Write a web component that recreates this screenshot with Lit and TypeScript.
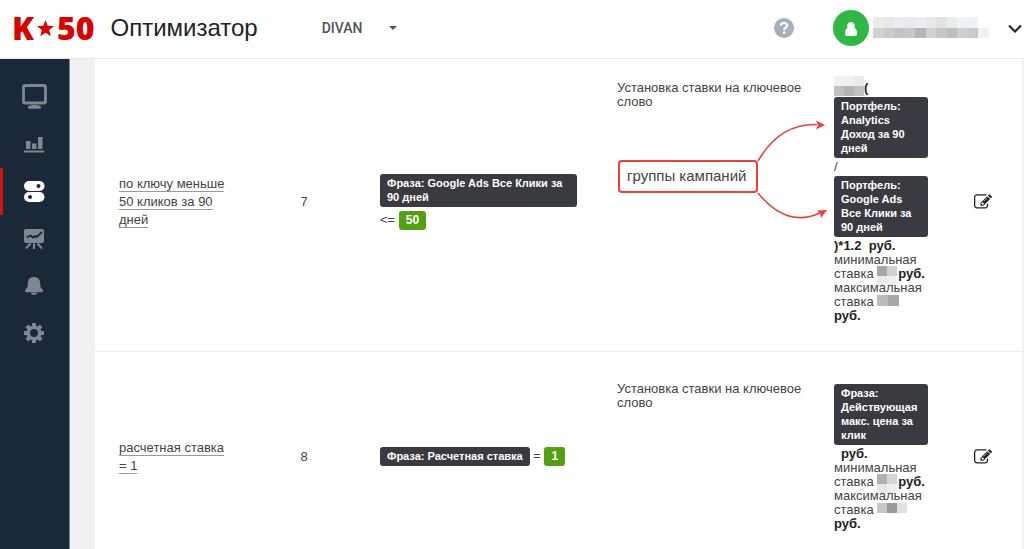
import { LitElement, html, css, svg, nothing } from "lit";
import { customElement, property } from "lit/decorators.js";
import { classMap } from "lit/directives/class-map.js";

/** Grid of flat squares that hides a private value. */
@customElement("masked-value")
class MaskedValue extends LitElement {
  @property({ attribute: false }) rows: string[][] = [];
  @property({ type: Number }) cell = 10;
  @property({ type: Number }) width = 30;
  @property({ type: Number }) lift = 0;

  static styles = css`
    :host {
      display: inline-block;
      height: 14px;
      vertical-align: top;
    }
    svg {
      display: block;
      overflow: visible;
    }
  `;

  render() {
    return html`<svg width=${this.width} height="14" aria-hidden="true" shape-rendering="crispEdges">
      ${this.rows.map((row, y) =>
        row.map((fill, x) => svg`<rect x=${x * this.cell} y=${y * this.cell - this.lift} width=${this.cell} height=${this.cell} fill=${fill}></rect>`)
      )}
    </svg>`;
  }
}

const navItems = [
  {
    label: "Обзор",
    icon: svg`<rect x="6.5" y="5.5" width="22" height="17.5" rx="1.5" fill="none" stroke="currentColor" stroke-width="2.8"/><path d="M11 27.5c0-1.600 3-2.400 6.500-2.400s6.500.8 6.500 2.400c0 .9-.6 1.200-1.500 1.200h-10c-.9 0-1.500-.3-1.500-1.200z" fill="currentColor"/>`,
  },
  {
    label: "Статистика",
    icon: svg`<path d="M9 14h4.500v8H9zM15 16.500h4.500V22H15zM21 10h4.500v12H21zM7 23.500h20v2H7z" fill="currentColor"/>`,
  },
  {
    label: "Оптимизатор",
    active: true,
    icon: svg`<rect x="7" y="7" width="20.500" height="10" rx="5" fill="currentColor"/><rect x="7" y="18" width="20.500" height="10" rx="5" fill="currentColor"/><circle cx="21.500" cy="12" r="2" fill="#1a2937"/><circle cx="13" cy="23" r="2" fill="#1a2937"/>`,
  },
  {
    label: "Отчёты",
    icon: svg`<rect x="7" y="8" width="20" height="14" rx="2" fill="currentColor"/><path d="M9.500 16.500l4-2 2.500 2 2-1.500 1.500 1 5.500-5" fill="none" stroke="#1a2937" stroke-width="1.800"/><path d="M13.500 22.500l-4.500 5M17 22.500V28M20.500 22.500l4.500 5" fill="none" stroke="currentColor" stroke-width="2"/>`,
  },
  {
    label: "Уведомления",
    icon: svg`<path d="M17 9c-4 0-6.200 2.800-6.200 6.500 0 3-.5 4.300-1.600 5.300-.8.700-1.200 1.200-1.200 2.200 0 .7.400 1.200 1.200 1.200h15.600c.8 0 1.200-.5 1.200-1.200 0-1-.4-1.500-1.200-2.200-1.100-1-1.600-2.300-1.600-5.300C23.200 11.800 21 9 17 9zM13.800 24.800c.4 1.400 1.600 2.200 3.200 2.200s2.800-.8 3.200-2.200z" fill="currentColor"/>`,
  },
  {
    label: "Настройки",
    icon: svg`<circle cx="17" cy="18" r="5.800" fill="none" stroke="currentColor" stroke-width="3.600"/><path d="M17 8v4M17 24v4M7 18h4M23 18h4M9.900 10.900l2.900 2.900M21.200 22.200l2.900 2.900M9.900 25.100l2.900-2.900M21.200 13.800l2.900-2.900" stroke="currentColor" stroke-width="4" fill="none"/>`,
  },
];

const editPath =
  "M888 1184l116-116-152-152-116 116v56h96v96h56zm440-720q-16-16-33 1l-350 350q-17 17-1 33t33-1l350-350q17-17 1-33zm80 594v190q0 119-84.500 203.500t-203.500 84.500h-832q-119 0-203.500-84.500t-84.500-203.500v-832q0-119 84.500-203.500t203.500-84.500h832q63 0 117 25 15 7 18 23 3 17-9 29l-49 49q-14 14-32 8-23-6-45-6h-832q-66 0-113 47t-47 113v832q0 66 47 113t113 47h832q66 0 113-47t47-113v-126q0-13 9-22l64-64q15-15 35-7t20 29zm-96-738l288 288-672 672h-288v-288zm444 132l-92 92-288-288 92-92q28-28 68-28t68 28l152 152q28 28 28 68t-28 68z";

const userMask = [
  ["#ebebeb", "#e8e8ea", "#ebedee", "#eae9ea", "#eceef0", "#e8e9ea", "#e0e3e3", "#e9ebed", "#f1f2f3", "#f1f1f2", "#ffffff"],
  ["#d3d1d1", "#cacbcf", "#c2c3c6", "#c6c8cb", "#b3b8bc", "#d2d1d0", "#c5c6cb", "#c0bfc0", "#cfced2", "#c5cad0", "#f0f2f2"],
];
const factorMask = [
  ["#f1f1f1", "#f1f1f1", "#eaeaeb"],
  ["#c2c0c1", "#b6b4b3", "#c1c1c5"],
];

@customElement("app-root")
class AppRoot extends LitElement {
  static styles = css`
    :host {
      display: grid;
      grid-template-rows: auto minmax(0, 1fr);
      height: 100vh;
      background: #f1f1f1;
      color: #444;
      font: 13px/14px "Liberation Sans", Arial, sans-serif;
    }
    *,
    *::before {
      box-sizing: border-box;
    }
    button {
      border: 0;
      padding: 0;
      background: none;
      color: inherit;
      font: inherit;
      cursor: pointer;
    }
    svg {
      display: block;
    }
    .header {
      display: flex;
      align-items: center;
      height: 59px;
      padding: 0 2px 2px 12px;
      background: #fff;
      border-bottom: 1px solid #e8e8e8;
    }
    .logo {
      display: flex;
      align-items: center;
      gap: 3px;
      color: #d90000;
      font: 800 32px/40px "Open Sans", "Noto Sans", sans-serif;
      text-decoration: none;
    }
    .title {
      margin: 0 0 0 16px;
      color: #222;
      font-size: 24px;
      font-weight: 400;
      line-height: 28px;
    }
    .project {
      display: grid;
      align-items: center;
      width: 76px;
      margin-left: 64px;
    }
    .project select,
    .project svg {
      grid-area: 1 / 1;
    }
    .project select {
      appearance: none;
      border: 0;
      padding: 0;
      background: none;
      color: #555;
      font: 500 14px/20px Roboto, sans-serif;
    }
    .project svg {
      justify-self: end;
      pointer-events: none;
    }
    .tools {
      display: flex;
      align-items: center;
      gap: 39px;
      margin-left: auto;
    }
    .user {
      display: flex;
      align-items: center;
    }
    .user masked-value {
      margin: 0 19px 0 4px;
    }
    .body {
      display: grid;
      grid-template-columns: 70px minmax(0, 1fr);
      min-height: 0;
    }
    .nav {
      display: flex;
      flex-direction: column;
      padding-top: 15px;
      background: #1a2937;
      border-right: 1px solid #7a838c;
    }
    .nav-link {
      display: grid;
      place-items: center;
      height: 47px;
      border-left: 3px solid transparent;
      padding-right: 3px;
      color: #7d8892;
    }
    .nav-link.active {
      border-color: #d0160f;
      color: #fff;
    }
    .main {
      overflow-y: auto;
      scrollbar-width: none;
      padding: 0 2px 0 25px;
    }
    .rules {
      width: 100%;
      margin-top: -8px;
      border-collapse: collapse;
      table-layout: fixed;
      background: #fff;
    }
    .col-name {
      width: 157px;
    }
    .col-priority {
      width: 104px;
    }
    .col-condition {
      width: 237px;
    }
    .col-result {
      width: 126px;
    }
    .col-edit {
      width: 86px;
    }
    td {
      padding: 30px 8px 28px 24px;
      text-align: left;
      vertical-align: middle;
    }
    tr {
      border-bottom: 1px solid #eee;
    }
    .name {
      padding-right: 24px;
      line-height: 18px;
    }
    .name a {
      color: inherit;
      text-decoration: none;
      border-bottom: 1px solid #999;
    }
    .priority {
      padding-left: 8px;
      text-align: center;
    }
    .condition {
      padding-right: 16px;
      line-height: 20px;
    }
    .action {
      position: relative;
      vertical-align: top;
    }
    .edit {
      padding-left: 38px;
    }
    .edit button {
      display: block;
      color: #222;
    }
    .tag {
      display: inline-block;
      margin: 2px 0;
      padding: 2px 7px 3px;
      border-radius: 3px;
      background: #3a3b41;
      color: #fff;
      font-size: 11px;
      font-weight: 700;
      line-height: 14px;
      vertical-align: middle;
    }
    .result .tag {
      display: block;
    }
    .tag.value {
      background: #55a012;
      font-size: 12px;
    }
    b {
      color: #222;
    }
    .indent {
      padding-left: 7px;
    }
    .line {
      display: block;
      white-space: pre;
    }
    .callout {
      position: absolute;
      top: 109px;
      left: 25px;
      display: flex;
    }
    .callout-text {
      height: 33px;
      padding: 4px 10px 0 7px;
      border: 2px solid #e8413a;
      border-radius: 4px;
      font-size: 15px;
      line-height: 20px;
      white-space: nowrap;
    }
    .callout svg {
      flex: none;
      margin: -42px 0 0 -1px;
    }
  `;

  private limit(kind: string, mask: string[][], cell: number, width: number, lift: number, wrapped: boolean) {
    return html`<span class="line">${kind}</span
      ><span class="line"
        >ставка <masked-value .rows=${mask} .cell=${cell} .width=${width} .lift=${lift}></masked-value>${wrapped ? nothing : html`<b>руб.</b>`}</span
      >${wrapped ? html`<b class="line">руб.</b>` : nothing}`;
  }

  private editCell(name: string) {
    return html`<td class="edit">
      <button type="button" aria-label="Изменить: ${name}">
        <svg width="18" height="18" viewBox="0 0 1792 1792"><path fill="currentColor" d=${editPath} /></svg>
      </button>
    </td>`;
  }

  render() {
    return html`
      <header class="header">
        <a class="logo" href="#" aria-label="K50">
          <span>K</span>
          <svg width="17" height="17" viewBox="0 0 17 17"><path fill="currentColor" d="M8.500 0l2.200 5.800 6.300.3-4.900 3.900 1.700 6.200-5.300-3.500-5.300 3.500 1.700-6.200L0 6.100l6.300-.3z" /></svg>
          <span>50</span>
        </a>
        <h1 class="title">Оптимизатор</h1>
        <label class="project">
          <select aria-label="Проект">
            <option>DIVAN</option>
          </select>
          <svg width="10" height="6" viewBox="0 0 10 6"><path fill="#555" d="M1 1h8L5 5z" /></svg>
        </label>
        <div class="tools">
          <button type="button" aria-label="Справка">
            <svg width="20" height="20" viewBox="0 0 20 20">
              <circle cx="10" cy="10" r="10" fill="#a5b0ba" />
              <path d="M6.900 7.700c0-1.700 1.300-2.800 3.100-2.800s3.200 1 3.200 2.600c0 2.200-3 2.100-3 4.400" fill="none" stroke="#fff" stroke-width="2.200" />
              <rect x="9" y="13.400" width="2.400" height="2.400" fill="#fff" />
            </svg>
          </button>
          <button class="user" type="button" aria-label="Меню пользователя">
            <svg width="36" height="36" viewBox="0 0 36 36">
              <circle cx="18" cy="18" r="18" fill="#2fb944" />
              <path d="M18 12a3.800 3.800 0 0 1 3.300 5.800c1.800.8 2.700 2.500 2.700 5.200 0 2-.6 3-2 3h-8c-1.400 0-2-1-2-3 0-2.700.9-4.400 2.700-5.200A3.800 3.800 0 0 1 18 12z" fill="#fff" />
            </svg>
            <masked-value .rows=${userMask} .cell=${10.5} .width=${116} .lift=${4}></masked-value>
            <svg width="14" height="9" viewBox="0 0 14 9"><path d="M1 1.500l6 6 6-6" fill="none" stroke="#222" stroke-width="2" /></svg>
          </button>
        </div>
      </header>
      <div class="body">
        <nav class="nav">
          ${navItems.map(
            (item) => html`<a class=${classMap({ "nav-link": true, active: !!item.active })} href="#" aria-label=${item.label}>
              <svg width="35" height="35" viewBox="0 0 35 35">${item.icon}</svg>
            </a>`
          )}
        </nav>
        <main class="main">
          <table class="rules">
            <colgroup>
              <col class="col-name" />
              <col class="col-priority" />
              <col class="col-condition" />
              <col />
              <col class="col-result" />
              <col class="col-edit" />
            </colgroup>
            <tbody>
              <tr>
                <td class="name"><a href="#">по ключу меньше 50 кликов за 90 дней</a></td>
                <td class="priority">7</td>
                <td class="condition">
                  <span class="tag">Фраза: Google Ads Все Клики за 90 дней</span>
                  &lt;= <span class="tag value">50</span>
                </td>
                <td class="action">
                  Установка ставки на ключевое слово
                  <div class="callout">
                    <span class="callout-text">группы кампаний</span>
                    <svg width="72" height="104" viewBox="0 0 72 104">
                      <path d="M1 43C17 16 36 6 60 6.500M1 75c17 21 38 31 62 20" fill="none" stroke="#e8413a" stroke-width="1.500" />
                      <path d="M68 7l-9-4.500 2 4.500-2 4.500zM70 92l-10 .5 3.200 3 .8 4.500z" fill="#e8413a" />
                    </svg>
                  </div>
                </td>
                <td class="result">
                  <span class="line"><masked-value .rows=${factorMask} .cell=${10} .width=${30} .lift=${5}></masked-value><b>(</b></span>
                  <span class="tag">Портфель: Analytics Доход за 90 дней</span>
                  <span class="line">/</span>
                  <span class="tag">Портфель: Google Ads Все Клики за 90 дней</span>
                  <b class="line">)*1.2  руб.</b>
                  ${this.limit("минимальная", [["#aaa6a6", "#cdd0d4"], ["#eaeaea", "#eef0f0"]], 10, 21, 1, false)}
                  ${this.limit("максимальная", [["#bbbbbc", "#a8a8aa"]], 11, 22, 0, true)}
                </td>
                ${this.editCell("по ключу меньше 50 кликов за 90 дней")}
              </tr>
              <tr>
                <td class="name"><a href="#">расчетная ставка = 1</a></td>
                <td class="priority">8</td>
                <td class="condition">
                  <span class="tag">Фраза: Расчетная ставка</span>
                  = <span class="tag value">1</span>
                </td>
                <td class="action">Установка ставки на ключевое слово</td>
                <td class="result">
                  <span class="tag">Фраза: Действующая макс. цена за клик</span>
                  <b class="line indent">руб.</b>
                  ${this.limit("минимальная", [["#b4b0ae", "#d3d5d8"], ["#e9e7e6", "#eceef0"]], 10, 21, 1, false)}
                  ${this.limit("максимальная", [["#c9c8c7", "#9b9b9d", "#dfe0e2"]], 10, 30, 0, true)}
                </td>
                ${this.editCell("расчетная ставка = 1")}
              </tr>
            </tbody>
          </table>
        </main>
      </div>
    `;
  }
}
